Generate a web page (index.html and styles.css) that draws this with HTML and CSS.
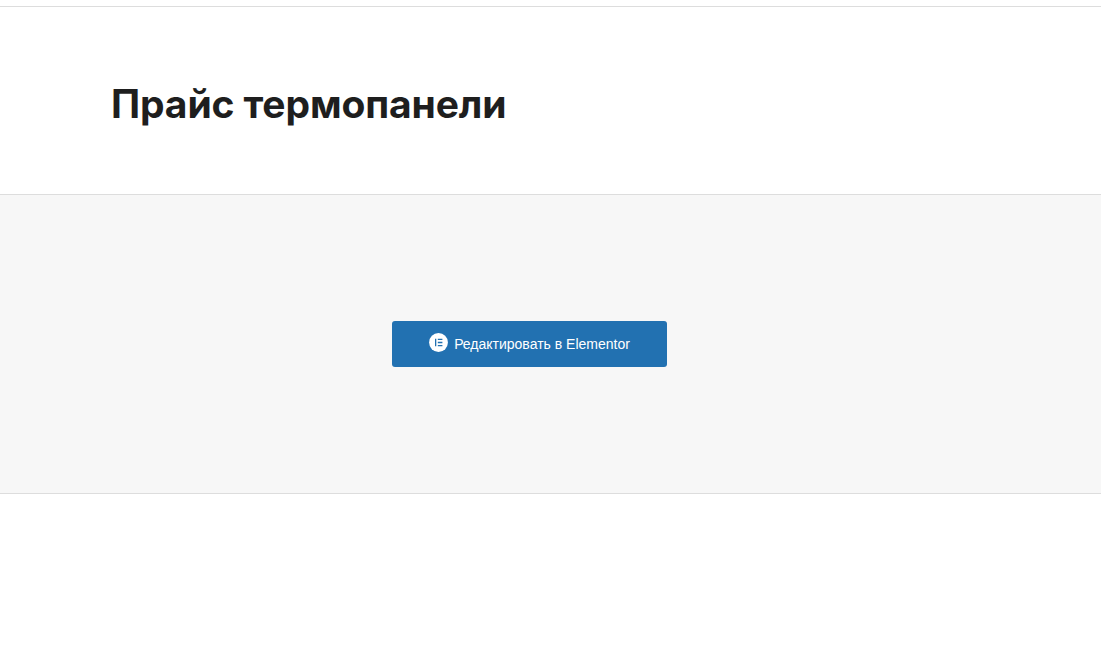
FILE: index.html
```html
<!DOCTYPE html>
<html lang="ru">
<head>
    <meta charset="UTF-8">
    <meta name="viewport" content="width=device-width, initial-scale=1.0">
    <title>Прайс термопанели</title>
    <link rel="stylesheet" href="styles.css">
</head>
<body>

    <header class="editor-header"></header>

    <main class="editor">
        <h1 class="post-title">Прайс термопанели</h1>

        <section class="elementor-panel">
            <button type="button" class="elementor-button">
                <svg class="elementor-icon" viewBox="0 0 19 19" aria-hidden="true">
                    <circle cx="9.5" cy="9.5" r="9.4" fill="#fff"/>
                    <path d="M6 5.7h1.3v7.6H6zM8.8 5.7h4.6V7H8.8zM8.8 8.85h4.6v1.3H8.8zM8.8 12h4.6v1.3H8.8z" fill="#2271b1"/>
                </svg>
                <span>Редактировать в Elementor</span>
            </button>
        </section>
    </main>

</body>
</html>
```

FILE: styles.css
```css
* {
    box-sizing: border-box;
}

body {
    margin: 0;
    background-color: #fff;
    color: #1e1e1e;
    font-family: "Liberation Sans", Arial, sans-serif;
}

.editor-header {
    height: 7px;
    border-bottom: 1px solid #ddd;
}

.post-title {
    margin: 0;
    padding: 69px 111px 0;
    height: 187px;
    font-family: Inter, sans-serif;
    font-size: 39px;
    font-weight: 700;
    line-height: 56px;
    letter-spacing: -0.12px;
}

.elementor-panel {
    display: flex;
    justify-content: center;
    align-items: center;
    height: 300px;
    padding-right: 42px;
    border-top: 1px solid #ddd;
    border-bottom: 1px solid #ddd;
    background-color: #f7f7f7;
}

.elementor-button {
    display: flex;
    justify-content: center;
    align-items: center;
    gap: 6px;
    width: 275px;
    height: 46px;
    padding: 0;
    border: none;
    border-radius: 3px;
    background-color: #2271b1;
    color: #fff;
    font-family: inherit;
    font-size: 14px;
    cursor: pointer;
}

.elementor-icon {
    width: 19px;
    height: 19px;
    margin-top: -3px;
}
```
